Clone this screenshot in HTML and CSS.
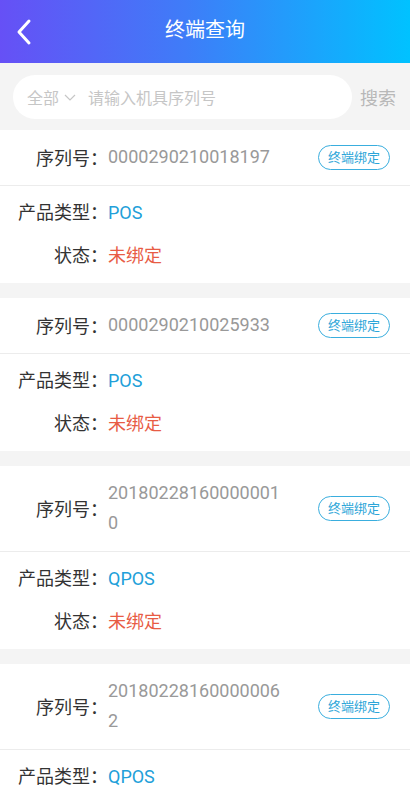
FILE: index.html
```html
<!DOCTYPE html>
<html>

	<head>
		<meta charset="UTF-8">
		<title>终端查询</title>
		<link rel="stylesheet" href="styles.css">
	</head>

	<body>
		<div class="header">
			<svg class="back" width="20" height="28" viewBox="0 0 20 28">
				<polyline points="14,3 4,14 14,25" fill="none" stroke="#fff" stroke-width="3" stroke-linecap="round" stroke-linejoin="round" />
			</svg>
			<h1>终端查询</h1>
		</div>
		<div class="search">
			<div class="search-box">
				<span class="type">全部</span>
				<svg class="arrow" width="12" height="8" viewBox="0 0 12 8">
					<polyline points="1,1 6,6 11,1" fill="none" stroke="#c6c6c6" stroke-width="1.2" />
				</svg>
				<span class="placeholder">请输入机具序列号</span>
			</div>
			<span class="search-btn">搜索</span>
		</div>

		<div class="card">
			<div class="serial">
				<span class="label">序列号：</span>
				<span class="serial-no">0000290210018197</span>
				<span class="bind">终端绑定</span>
			</div>
			<div class="info">
				<p><span class="label">产品类型：</span><span class="type-val">POS</span></p>
				<p><span class="label">状态：</span><span class="state">未绑定</span></p>
			</div>
		</div>

		<div class="card">
			<div class="serial">
				<span class="label">序列号：</span>
				<span class="serial-no">0000290210025933</span>
				<span class="bind">终端绑定</span>
			</div>
			<div class="info">
				<p><span class="label">产品类型：</span><span class="type-val">POS</span></p>
				<p><span class="label">状态：</span><span class="state">未绑定</span></p>
			</div>
		</div>

		<div class="card">
			<div class="serial">
				<span class="label">序列号：</span>
				<span class="serial-no">201802281600000010</span>
				<span class="bind">终端绑定</span>
			</div>
			<div class="info">
				<p><span class="label">产品类型：</span><span class="type-val">QPOS</span></p>
				<p><span class="label">状态：</span><span class="state">未绑定</span></p>
			</div>
		</div>

		<div class="card">
			<div class="serial">
				<span class="label">序列号：</span>
				<span class="serial-no">201802281600000062</span>
				<span class="bind">终端绑定</span>
			</div>
			<div class="info">
				<p><span class="label">产品类型：</span><span class="type-val">QPOS</span></p>
				<p><span class="label">状态：</span><span class="state">未绑定</span></p>
			</div>
		</div>
	</body>

</html>
```

FILE: styles.css
```css
* {
	margin: 0;
	padding: 0;
}

body {
	background: #f4f4f4;
	font-family: Roboto, "Noto Sans CJK SC", sans-serif;
	color: #333;
}

.header {
	height: 63px;
	background: linear-gradient(90deg, #6650f6, #3f7cf8 45%, #00c2ff);
	display: flex;
	align-items: center;
	justify-content: center;
	position: relative;
}

.header h1 {
	font-size: 20px;
	font-weight: 400;
	color: #fff;
	line-height: 63px;
	margin-top: -3px;
}

.back {
	position: absolute;
	left: 15px;
	top: 18px;
}

.search {
	display: flex;
	align-items: center;
	padding: 12px 0 11px 13px;
}

.search-box {
	width: 339px;
	height: 44px;
	background: #fff;
	border-radius: 22px;
	display: flex;
	align-items: center;
	font-size: 16px;
	color: #c6c6c6;
}

.type {
	margin-left: 14px;
}

.arrow {
	margin: 2px 0 0 5px;
}

.placeholder {
	margin-left: 12px;
}

.search-btn {
	font-size: 18px;
	color: #b8b8b8;
	margin-left: 8px;
}

.card {
	background: #fff;
	margin-bottom: 15px;
}

.serial {
	display: flex;
	align-items: center;
	padding: 12px 20px 13px 0;
	border-bottom: 1px solid #ececec;
	font-size: 18px;
}

.label {
	display: inline-block;
	width: 108px;
	text-align: right;
	font-size: 18px;
	color: #333;
	flex-shrink: 0;
}

.serial-no {
	flex: 1;
	color: #999;
	line-height: 30px;
	word-break: break-all;
	padding-right: 30px;
}

.bind {
	flex-shrink: 0;
	font-size: 13px;
	color: #2ba5d8;
	border: 1px solid #3aaede;
	border-radius: 13px;
	height: 23px;
	line-height: 23px;
	padding: 0 9px;
}

.info {
	padding: 5px 0 6px;
}

.info p {
	line-height: 43px;
	font-size: 18px;
	display: flex;
}

.type-val {
	color: #229fd9;
}

.state {
	color: #e85c45;
}
```
